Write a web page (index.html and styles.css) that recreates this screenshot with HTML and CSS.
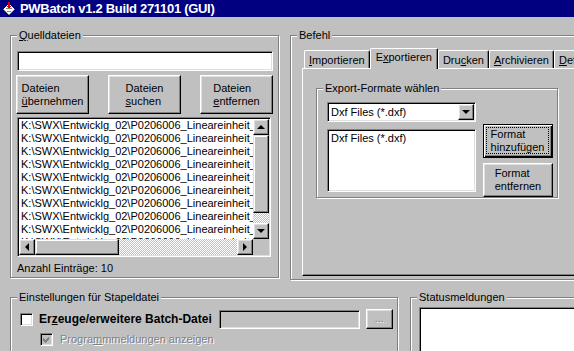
FILE: index.html
```html
<!DOCTYPE html>
<html lang="de">
<head>
  <meta charset="UTF-8">
  <title>PWBatch v1.2 Build 271101 (GUI)</title>
  <link rel="stylesheet" href="styles.css">
</head>
<body>
  <!-- Titelleiste -->
  <div class="titlebar">
    <svg class="app-icon" width="14" height="14" viewBox="0 0 14 14" shape-rendering="crispEdges">
      <polygon points="7,2 13,7 7,13 1,7" fill="#fff"/>
      <polyline points="13,7 7,13 1,7" fill="none" stroke="#808080" stroke-width="1"/>
      <rect x="4" y="6" width="6" height="1" fill="#808080"/>
      <rect x="5" y="9" width="4" height="1" fill="#808080"/>
      <rect x="6" y="0" width="2" height="6" fill="#e00000"/>
      <rect x="5" y="4" width="4" height="1" fill="#e00000"/>
    </svg>
    <span>PWBatch v1.2 Build 271101 (GUI)</span>
  </div>

  <div class="client">
    <div class="row row-top">

      <!-- Quelldateien -->
      <div class="group g-source">
        <span class="legend"><u>Q</u>uelldateien</span>
        <div class="field sunken"></div>
        <div class="btn-row">
          <div class="btn big"><span class="btn-label">Dateien<br><u>ü</u>bernehmen</span></div>
          <div class="btn big"><span class="btn-label">Dateien<br><u>s</u>uchen</span></div>
          <div class="btn big"><span class="btn-label">Dateien<br><u>e</u>ntfernen</span></div>
        </div>
        <div class="listbox sunken">
          <div class="items" id="fileList"></div>
          <div class="vscroll">
            <div class="arrow"><i class="tri up"></i></div>
            <div class="thumb v-thumb"></div>
            <div class="track"></div>
            <div class="arrow"><i class="tri down"></i></div>
          </div>
          <div class="hscroll">
            <div class="arrow"><i class="tri left"></i></div>
            <div class="thumb h-thumb"></div>
            <div class="track"></div>
            <div class="arrow"><i class="tri right"></i></div>
          </div>
          <div class="corner"></div>
        </div>
        <div class="count">Anzahl Einträge: 10</div>
      </div>

      <!-- Befehl -->
      <div class="group g-cmd">
        <span class="legend">Befehl</span>
        <div class="tabs">
          <div class="tab"><u>I</u>mportieren</div>
          <div class="tab active">E<u>x</u>portieren</div>
          <div class="tab">Dru<u>c</u>ken</div>
          <div class="tab"><u>A</u>rchivieren</div>
          <div class="tab"><u>D</u>efinitionen</div>
        </div>
        <div class="pane">
          <div class="group g-export">
            <span class="legend">Export-Formate wählen</span>
            <div class="fmt-col">
              <div class="combo sunken">
                <span class="combo-text">Dxf Files (*.dxf)</span>
                <div class="arrow drop"><i class="tri down"></i></div>
              </div>
              <div class="fmt-list sunken">Dxf Files (*.dxf)</div>
            </div>
            <div class="fmt-btns">
              <div class="btn fmt default"><span class="focus"><span class="btn-label">Format<br>hinzufügen</span></span></div>
              <div class="btn fmt"><span class="btn-label">Format<br>entfernen</span></div>
            </div>
          </div>
        </div>
      </div>
    </div>

    <div class="row row-bottom">
      <!-- Einstellungen für Stapeldatei -->
      <div class="group g-batch">
        <span class="legend">Einstellungen für Stapeldatei</span>
        <div class="opt-row">
          <div class="check sunken"></div>
          <span class="opt-label">Er<u>z</u>euge/erweitere Batch-Datei</span>
          <div class="path-field sunken"></div>
          <div class="btn dots">...</div>
        </div>
        <div class="opt-row sub">
          <div class="check sunken disabled">
            <svg width="7" height="7" viewBox="0 0 7 7" shape-rendering="crispEdges">
              <path d="M0 2 L2 4 L6 0 L6 3 L2 7 L0 5 Z" fill="#808080"/>
            </svg>
          </div>
          <span class="sub-label">Progra<u>m</u>mmeldungen anzeigen</span>
        </div>
      </div>

      <!-- Statusmeldungen -->
      <div class="group g-status">
        <span class="legend">Statusmeldungen</span>
        <div class="status-box sunken"></div>
      </div>
    </div>
  </div>

  <script>
    // Liste mit 10 Einträgen füllen
    var fileList = document.getElementById("fileList");
    for (var i = 0; i < 10; i++) {
      var row = document.createElement("div");
      row.className = "item";
      row.textContent = "K:\\SWX\\Entwicklg_02\\P0206006_Lineareinheit_0" + i + ".SLDPRT";
      fileList.appendChild(row);
    }
  </script>
</body>
</html>
```

FILE: styles.css
```css
* {
  box-sizing: border-box;
}

body {
  margin: 0;
  width: 574px;
  height: 351px;
  overflow: hidden;
  background: #c0c0c0;
  color: #000;
  font: 11px/13px "Liberation Sans", Arial, sans-serif;
}

u {
  text-decoration-thickness: 1px;
  text-underline-offset: 1px;
}

/* Titelleiste */
.titlebar {
  height: 17px;
  display: flex;
  align-items: center;
  gap: 4px;
  padding-left: 2px;
  background: #000080;
  color: #fff;
  font: bold 13px/17px "Liberation Sans", Arial, sans-serif;
  letter-spacing: -0.3px;
  white-space: nowrap;
}

.app-icon {
  flex: none;
}

.client {
  padding: 18px 0 0 10px;
}

.row {
  display: flex;
  align-items: flex-start;
}

.row-top {
  gap: 11px;
}

.row-bottom {
  gap: 12px;
  margin-top: 17px;
}

/* Gruppenrahmen (geätzt) */
.group {
  position: relative;
  flex: none;
  border: 1px solid #808080;
  box-shadow: inset 1px 1px #fff, 1px 1px #fff;
}

.legend {
  position: absolute;
  top: -7px;
  left: 6px;
  padding: 0 2px;
  background: #c0c0c0;
  white-space: nowrap;
}

/* 3D Rahmen */
.sunken {
  border: 1px solid;
  border-color: #808080 #fff #fff #808080;
  box-shadow: inset 1px 1px #000, inset -1px -1px #dfdfdf;
}

.btn, .arrow {
  display: flex;
  align-items: center;
  justify-content: center;
  background: #c0c0c0;
  border: 1px solid;
  border-color: #fff #000 #000 #fff;
  box-shadow: inset -1px -1px #808080, inset 1px 1px #dfdfdf;
}

.btn-label {
  display: inline-block;
  text-align: left;
}

/* Quelldateien */
.g-source {
  width: 269px;
  height: 243px;
  padding: 15px 0 0 6px;
}

.field {
  width: 256px;
  height: 20px;
  background: #fff;
}

.btn-row {
  display: flex;
  justify-content: space-between;
  width: 257px;
  margin: 4px 0 0 -1px;
}

.btn.big {
  width: 73px;
  height: 39px;
}

.listbox {
  width: 254px;
  height: 140px;
  margin-top: 3px;
  padding: 1px;
  background: #fff;
  display: grid;
  grid-template-columns: 1fr 16px;
  grid-template-rows: 1fr 16px;
}

.items {
  overflow: hidden;
  padding-left: 2px;
  white-space: nowrap;
}

.item {
  height: 13px;
}

.vscroll, .hscroll {
  display: flex;
  background: repeating-conic-gradient(#c0c0c0 0% 25%, #fff 0% 50%) 0 0 / 2px 2px;
}

.vscroll {
  flex-direction: column;
}

.arrow {
  width: 16px;
  height: 16px;
  flex: none;
}

.thumb {
  flex: none;
  background: #c0c0c0;
  border: 1px solid;
  border-color: #dfdfdf #000 #000 #dfdfdf;
  box-shadow: inset -1px -1px #808080, inset 1px 1px #fff;
}

.v-thumb {
  height: 78px;
}

.h-thumb {
  width: 84px;
}

.track {
  flex: 1;
}

.corner {
  background: #c0c0c0;
}

.tri {
  width: 0;
  height: 0;
  border: 4px solid transparent;
}

.tri.up {
  border-bottom-color: #000;
  border-top-width: 0;
  margin-top: -1px;
}

.tri.down {
  border-top-color: #000;
  border-bottom-width: 0;
}

.tri.left {
  border-right-color: #000;
  border-left-width: 0;
}

.tri.right {
  border-left-color: #000;
  border-right-width: 0;
}

.count {
  margin-top: 5px;
}

/* Befehl / Registerkarten */
.g-cmd {
  width: 300px;
  height: 245px;
  padding: 12px 0 0 11px;
}

.tabs {
  position: relative;
  z-index: 1;
  display: flex;
  align-items: flex-end;
  height: 20px;
  padding-left: 2px;
}

.tab {
  flex: none;
  height: 18px;
  padding: 3px 4px 0 4px;
  border: 1px solid;
  border-color: #fff #000 transparent #fff;
  border-bottom: 0;
  border-radius: 2px 2px 0 0;
  box-shadow: inset -1px 0 #808080;
  white-space: nowrap;
}

.tab.active {
  height: 21px;
  margin-bottom: -1px;
  padding: 2px 5px 0 5px;
  background: #c0c0c0;
}

.pane {
  width: 280px;
  height: 208px;
  padding: 19px 0 0 13px;
  border: 1px solid;
  border-color: #fff #000 #000 #fff;
  box-shadow: inset -1px -1px #808080;
}

.g-export {
  width: 242px;
  height: 110px;
  padding: 13px 0 0 10px;
  display: flex;
  gap: 7px;
}

.fmt-col {
  width: 149px;
  display: flex;
  flex-direction: column;
  gap: 7px;
}

.combo {
  height: 20px;
  padding: 1px;
  display: flex;
  align-items: center;
  background: #fff;
}

.combo-text {
  flex: 1;
  padding-left: 2px;
}

.fmt-list {
  height: 63px;
  padding: 2px 3px;
  background: #fff;
}

.fmt-btns {
  width: 70px;
  display: flex;
  flex-direction: column;
  justify-content: flex-end;
  gap: 5px;
}

.btn.fmt {
  height: 34px;
}

.btn.default {
  border-color: #000;
  box-shadow: inset 1px 1px #fff, inset -1px -1px #000, inset -2px -2px #808080;
  padding: 2px 3px 3px 2px;
}

.focus {
  display: flex;
  align-items: center;
  justify-content: center;
  width: 100%;
  height: 100%;
  border: 1px dotted #000;
}

/* Einstellungen für Stapeldatei */
.g-batch {
  width: 388px;
  height: 80px;
  padding: 11px 0 0 9px;
}

.opt-row {
  display: flex;
  align-items: center;
  height: 20px;
}

.check {
  width: 13px;
  height: 13px;
  flex: none;
  display: flex;
  align-items: center;
  justify-content: center;
  background: #fff;
}

.check.disabled {
  background: #c0c0c0;
}

.opt-label {
  margin-left: 6px;
  font-weight: bold;
  font-size: 12px;
  white-space: nowrap;
}

.path-field {
  width: 141px;
  height: 19px;
  margin-left: 7px;
  background: #c0c0c0;
}

.btn.dots {
  width: 27px;
  height: 20px;
  margin-left: 6px;
  color: #808080;
  text-shadow: 1px 1px #fff;
  padding-bottom: 2px;
}

.opt-row.sub {
  height: 13px;
  margin: 4px 0 0 20px;
}

.sub-label {
  margin-left: 7px;
  color: #808080;
  text-shadow: 1px 1px #fff;
  white-space: nowrap;
}

/* Statusmeldungen */
.g-status {
  width: 200px;
  height: 80px;
  padding: 9px 0 0 8px;
}

.status-box {
  width: 170px;
  height: 60px;
  background: #fff;
}
```
